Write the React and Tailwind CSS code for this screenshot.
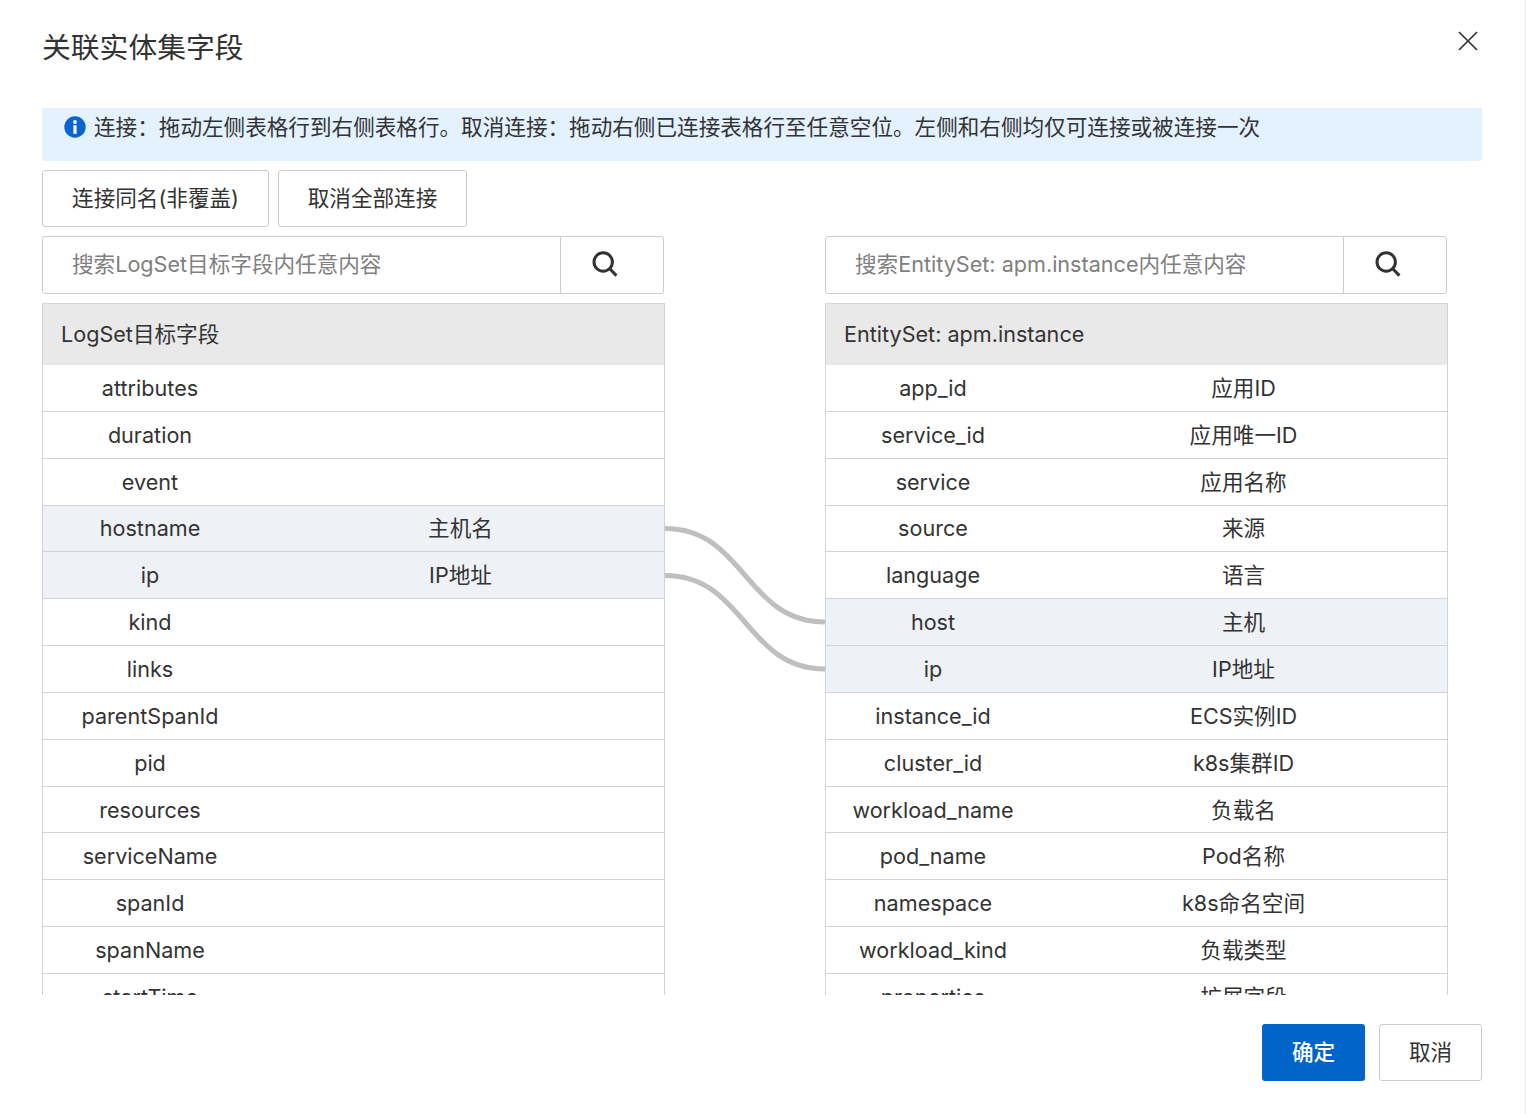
const left = [
  ["attributes", ""], ["duration", ""], ["event", ""], ["hostname", "主机名", 1], ["ip", "IP地址", 1],
  ["kind", ""], ["links", ""], ["parentSpanId", ""], ["pid", ""], ["resources", ""], ["serviceName", ""],
  ["spanId", ""], ["spanName", ""], ["startTime", ""],
];
const right = [
  ["app_id", "应用ID"], ["service_id", "应用唯一ID"], ["service", "应用名称"], ["source", "来源"], ["language", "语言"],
  ["host", "主机", 1], ["ip", "IP地址", 1], ["instance_id", "ECS实例ID"], ["cluster_id", "k8s集群ID"],
  ["workload_name", "负载名"], ["pod_name", "Pod名称"], ["namespace", "k8s命名空间"], ["workload_kind", "负载类型"], ["properties", "扩展字段"],
];

function SearchIcon() {
  return (
    <svg width="26" height="26" viewBox="0 0 26 26" fill="none" stroke="#333333" strokeWidth="3">
      <circle cx="11.2" cy="11" r="9.2" />
      <path d="M17.8 17.8 L24.4 24.6" />
    </svg>
  );
}

function Search({ placeholder }) {
  return (
    <div className="flex h-[58px] w-[622px] rounded-[3px] border border-[#cccccc] bg-white">
      <div className="flex-1 flex items-center pl-[29px] pb-[2px] text-[#808080] truncate">{placeholder}</div>
      <div className="w-[103px] flex items-center justify-center border-l border-[#cccccc] pr-[14px] pb-[2px]">
        <SearchIcon />
      </div>
    </div>
  );
}

function Table({ title, rows }) {
  return (
    <div className="w-[623px] border-l border-r border-[#d2d2da]">
      <div className="h-[62px] pb-[2px] border-t border-[#d9d9d9] bg-[#e9e9e9] flex items-center pl-[18px] text-[#333333]">{title}</div>
      {rows.map(([a, b, on], i) => (
        <div key={i} className={"flex h-[46.85px] items-center border-b border-[#d2d2da] text-[#333333] " + (on ? "bg-[#eef1f6]" : "bg-white")}>
          <div className="w-[214px] text-center">{a}</div>
          <div className="flex-1 text-center">{b}</div>
        </div>
      ))}
    </div>
  );
}

export default function App() {
  return (
    <div className="relative h-[1114px] w-[1526px] overflow-hidden bg-white border-r border-[#e6e6e6] text-[21.6px] leading-[30px] text-[#333333] [font-family:Inter,'Noto_Sans_CJK_SC',sans-serif] pl-[42px] pr-[43px] flex flex-col">
      <div className="h-[108px] flex justify-between pt-[26px]">
        <div className="text-[28.8px] leading-[43px] text-[#333333]">关联实体集字段</div>
        <svg className="mt-[4px] mr-[3px]" width="22" height="22" viewBox="0 0 22 22" stroke="#333333" strokeWidth="1.7" fill="none">
          <path d="M2 2 L20 20 M20 2 L2 20" />
        </svg>
      </div>

      <div className="h-[53px] bg-[#e4f1fe] rounded-b-[3px] flex items-start pt-[4px] pl-[22px] gap-[8px]">
        <svg className="mt-[4px]" width="22" height="22" viewBox="0 0 22 22">
          <circle cx="11" cy="11" r="10.7" fill="#0a64d0" />
          <rect x="9.4" y="9.2" width="3.2" height="8.6" fill="white" />
          <circle cx="11" cy="6" r="1.9" fill="white" />
        </svg>
        <span>连接：拖动左侧表格行到右侧表格行。取消连接：拖动右侧已连接表格行至任意空位。左侧和右侧均仅可连接或被连接一次</span>
      </div>

      <div className="mt-[9px] flex gap-[9px]">
        <button className="h-[57px] w-[227px] pb-[2px] rounded-[3px] border border-[#cccccc] bg-white text-[#333333]">连接同名(非覆盖)</button>
        <button className="h-[57px] w-[189px] pb-[2px] rounded-[3px] border border-[#cccccc] bg-white text-[#333333]">取消全部连接</button>
      </div>

      <div className="mt-[9px] flex gap-[161px]">
        <Search placeholder="搜索LogSet目标字段内任意内容" />
        <Search placeholder="搜索EntitySet: apm.instance内任意内容" />
      </div>

      <div className="relative mt-[9px] h-[692px] overflow-hidden flex gap-[160px]">
        <Table title="LogSet目标字段" rows={left} />
        <Table title="EntitySet: apm.instance" rows={right} />
        <svg className="absolute left-[623px] top-0" width="160" height="400" fill="none" stroke="#bfbfbf" strokeWidth="5">
          <path d="M0 225.5 C 80 225.5, 80 319, 160 319" />
          <path d="M0 272.5 C 80 272.5, 80 366, 160 366" />
        </svg>
      </div>

      <div className="mt-[29px] flex justify-end gap-[14px]">
        <button className="h-[57px] w-[103px] pb-[2px] rounded-[3px] bg-[#0064c8] text-white font-medium">确定</button>
        <button className="h-[57px] w-[103px] pb-[2px] rounded-[3px] border border-[#cccccc] bg-white text-[#333333]">取消</button>
      </div>
    </div>
  );
}
